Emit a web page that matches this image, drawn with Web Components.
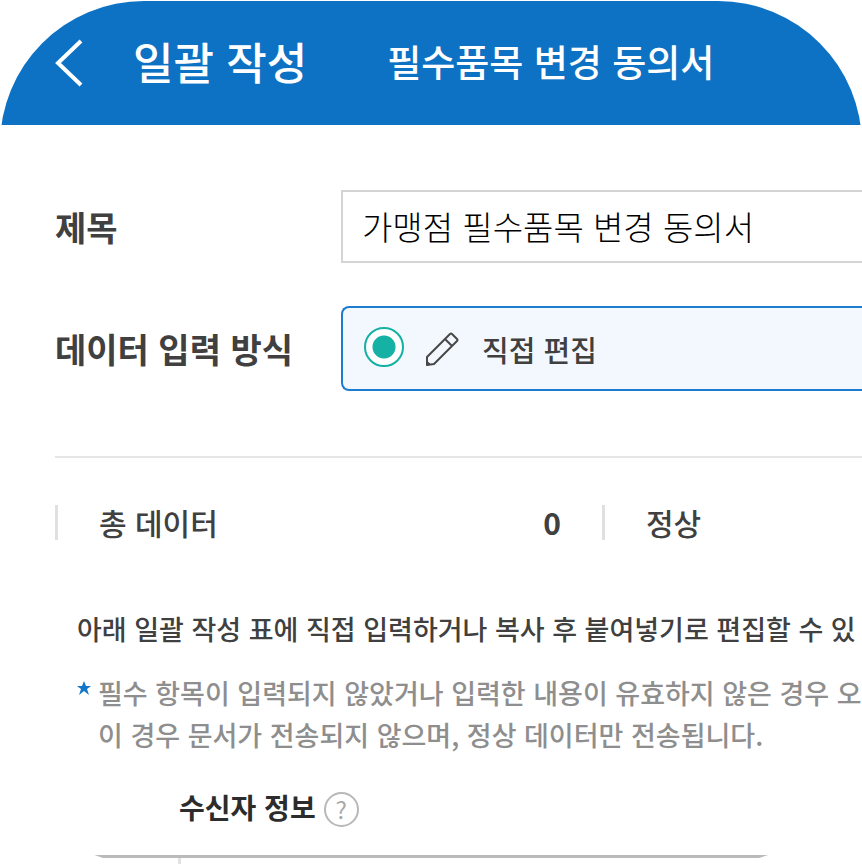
<!DOCTYPE html>
<html lang="ko">
<head>
<meta charset="UTF-8">
<meta name="viewport" content="width=device-width, initial-scale=1">
<title>일괄 작성</title>
<style>
  body {
    margin: 0;
    background: #fff;
    font-family: "Noto Sans CJK KR", "Noto Sans", sans-serif;
    color: #404040;
  }
</style>
</head>
<body>
<batch-card>
  <title-bar slot="header" heading="일괄 작성" document="필수품목 변경 동의서"></title-bar>
  <text-field label="제목" value="가맹점 필수품목 변경 동의서"></text-field>
  <choice-field label="데이터 입력 방식" option="직접 편집"></choice-field>
  <stat-strip>
    <stat-item label="총 데이터" value="0"></stat-item>
    <stat-item label="정상"></stat-item>
  </stat-strip>
  <guide-text>
    아래 일괄 작성 표에 직접 입력하거나 복사 후 붙여넣기로 편집할 수 있
    <span slot="note">필수 항목이 입력되지 않았거나 입력한 내용이 유효하지 않은 경우 오<br>이 경우 문서가 전송되지 않으며, 정상 데이터만 전송됩니다.</span>
  </guide-text>
  <recipient-grid slot="footer" heading="수신자 정보"></recipient-grid>
</batch-card>

<script>
class BatchCard extends HTMLElement {
  constructor() {
    super();
    this.attachShadow({ mode: 'open' });
    this.shadowRoot.innerHTML = `
      <style>
        :host {
          display: flex;
          flex-direction: column;
          box-sizing: border-box;
          min-height: calc(100vh - 1px);
          margin-top: 1px;
          border-radius: 144px;
          overflow: hidden;
          background: #fff;
        }
        main {
          padding: 65px 0 0 55px;
        }
      </style>
      <slot name="header"></slot>
      <main><slot></slot></main>
      <slot name="footer"></slot>
    `;
  }
}

class TitleBar extends HTMLElement {
  connectedCallback() {
    this.attachShadow({ mode: 'open' });
    this.shadowRoot.innerHTML = `
      <style>
        :host {
          display: flex;
          align-items: center;
          height: 124px;
          padding-left: 54px;
          background: #0e72c4;
          color: #fff;
          white-space: nowrap;
        }
        button {
          display: flex;
          padding: 0;
          border: 0;
          background: none;
          color: inherit;
          cursor: pointer;
        }
        h1, p {
          margin: 0;
          padding-bottom: 4px;
          font-weight: 500;
        }
        h1 {
          margin-left: 49px;
          font-size: 44px;
        }
        p {
          margin-left: 80px;
          font-size: 37px;
        }
      </style>
      <button type="button" aria-label="뒤로">
        <svg width="30" height="50" viewBox="0 0 30 50" fill="none" stroke="currentColor" stroke-width="4">
          <path d="M27 3 4 25l23 22"/>
        </svg>
      </button>
      <h1>${this.getAttribute('heading')}</h1>
      <p>${this.getAttribute('document')}</p>
    `;
  }
}

class TextField extends HTMLElement {
  connectedCallback() {
    this.attachShadow({ mode: 'open' });
    this.shadowRoot.innerHTML = `
      <style>
        :host {
          display: grid;
          grid-template-columns: 286px 1fr;
          align-items: center;
          margin-bottom: 43px;
        }
        label {
          font-size: 34px;
          font-weight: 700;
        }
        input {
          box-sizing: border-box;
          width: 100%;
          height: 73px;
          padding: 0 19px 2px;
          border: 2px solid #d4d4d4;
          border-right: 0;
          background: #fff;
          color: #000;
          font-family: inherit;
          font-size: 33px;
          font-weight: 300;
        }
      </style>
      <label for="field">${this.getAttribute('label')}</label>
      <input id="field" type="text" value="${this.getAttribute('value')}">
    `;
  }
}

class ChoiceField extends HTMLElement {
  connectedCallback() {
    this.attachShadow({ mode: 'open' });
    this.shadowRoot.innerHTML = `
      <style>
        :host {
          display: block;
          padding-bottom: 65px;
          border-bottom: 2px solid #e6e6e6;
        }
        .group {
          display: grid;
          grid-template-columns: 286px 1fr;
          align-items: center;
          white-space: nowrap;
        }
        .name {
          font-size: 34px;
          font-weight: 700;
        }
        .option {
          display: flex;
          align-items: center;
          box-sizing: border-box;
          height: 85px;
          padding-left: 21px;
          border: 2px solid #1c7cd0;
          border-right: 0;
          border-radius: 8px 0 0 8px;
          background: #f2f8fd;
          font-size: 29px;
          font-weight: 500;
        }
        input {
          appearance: none;
          box-sizing: border-box;
          width: 40px;
          height: 40px;
          margin: 0 0 4px;
          border: 2px solid #14b1a4;
          border-radius: 50%;
          background: #fff;
        }
        input:checked {
          background: radial-gradient(circle, #14b1a4 11px, #fff 12px);
        }
        svg {
          margin: 0 22px 0 20px;
        }
      </style>
      <div class="group" role="radiogroup" aria-labelledby="name">
        <span class="name" id="name">${this.getAttribute('label')}</span>
        <label class="option">
          <input type="radio" name="method" checked>
          <svg width="36" height="36" viewBox="0 0 36 36" fill="none" stroke="#484848" stroke-width="2" stroke-linejoin="round" aria-hidden="true">
            <path d="M3 34v-8L26 3q1-1 2 0l5 5q1 1 0 2L10 33zM21 8l7 7M3 31l3 3"/>
          </svg>
          <span>${this.getAttribute('option')}</span>
        </label>
      </div>
    `;
  }
}

class StatStrip extends HTMLElement {
  constructor() {
    super();
    this.attachShadow({ mode: 'open' });
    this.shadowRoot.innerHTML = `
      <style>
        :host {
          display: grid;
          grid-template-columns: 547px 1fr;
          margin-top: 47px;
        }
      </style>
      <slot></slot>
    `;
  }
}

class StatItem extends HTMLElement {
  connectedCallback() {
    this.attachShadow({ mode: 'open' });
    this.shadowRoot.innerHTML = `
      <style>
        :host {
          display: flex;
          align-items: center;
          justify-content: space-between;
          height: 35px;
          padding: 0 41px;
          border-left: 3px solid #e0e0e0;
          font-size: 30px;
          font-weight: 500;
          line-height: 35px;
        }
        .value {
          font-weight: 700;
        }
      </style>
      <span>${this.getAttribute('label')}</span>
      <span class="value">${this.getAttribute('value') || ''}</span>
    `;
  }
}

class GuideText extends HTMLElement {
  constructor() {
    super();
    this.attachShadow({ mode: 'open' });
    this.shadowRoot.innerHTML = `
      <style>
        :host {
          display: block;
          margin: 68px 0 0 22px;
          font-size: 27px;
          line-height: 42px;
          white-space: nowrap;
        }
        p {
          margin: 0;
          font-weight: 500;
        }
        .note {
          display: flex;
          margin-top: 22px;
          color: #8e8e8e;
        }
        svg {
          flex: none;
          margin: 9px 7px 0 0;
        }
      </style>
      <p><slot></slot></p>
      <p class="note">
        <svg width="14" height="14" viewBox="0 0 14 14" fill="#1476c8" aria-hidden="true">
          <path d="M7 0l2 5h5l-4 3 2 6-5-4-5 4 2-6-4-3h5z"/>
        </svg>
        <slot name="note"></slot>
      </p>
    `;
  }
}

class RecipientGrid extends HTMLElement {
  connectedCallback() {
    this.attachShadow({ mode: 'open' });
    this.shadowRoot.innerHTML = `
      <style>
        :host {
          display: flex;
          flex-direction: column;
          flex: 1;
          margin-top: 30px;
        }
        header {
          display: flex;
          align-items: center;
          gap: 8px;
          margin: 0 0 27px 179px;
          color: #2c2c2c;
        }
        h2 {
          margin: 0;
          font-size: 28px;
          font-weight: 700;
          line-height: 42px;
        }
        button {
          box-sizing: border-box;
          width: 35px;
          height: 35px;
          margin-top: 4px;
          padding: 0;
          border: 2px solid #b8b8b8;
          border-radius: 50%;
          background: none;
          color: #a8a8a8;
          font-family: inherit;
          font-size: 24px;
          font-weight: 400;
          line-height: 30px;
        }
        /* first row of the sheet, row number column on the left */
        .sheet {
          display: grid;
          grid-template-columns: 178px 1fr;
          flex: 1;
          border-top: 3px solid #bababa;
        }
        .sheet div + div {
          border-left: 3px solid #e2e2e2;
        }
      </style>
      <header>
        <h2>${this.getAttribute('heading')}</h2>
        <button type="button" aria-label="도움말">?</button>
      </header>
      <div class="sheet"><div></div><div></div></div>
    `;
  }
}

customElements.define('batch-card', BatchCard);
customElements.define('title-bar', TitleBar);
customElements.define('text-field', TextField);
customElements.define('choice-field', ChoiceField);
customElements.define('stat-strip', StatStrip);
customElements.define('stat-item', StatItem);
customElements.define('guide-text', GuideText);
customElements.define('recipient-grid', RecipientGrid);
</script>
</body>
</html>
